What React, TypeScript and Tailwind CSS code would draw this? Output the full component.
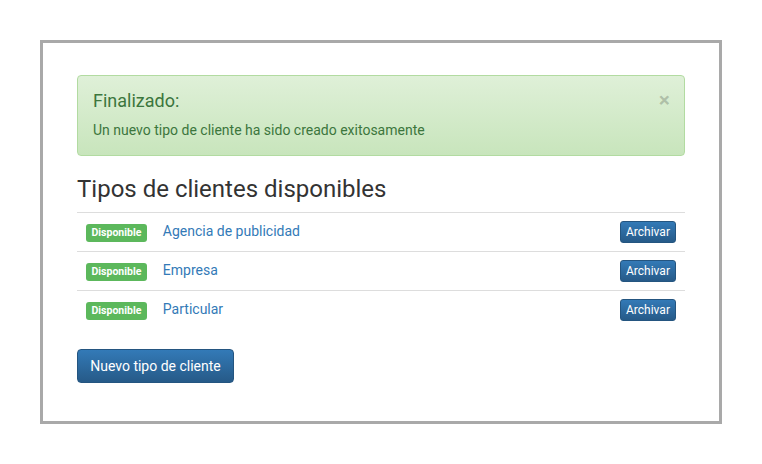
const tipos = ["Agencia de publicidad", "Empresa", "Particular"];

export default function App() {
  return (
    <div
      className="w-[762px] h-[464px] bg-white pt-[40px] pl-[40px]"
      style={{ fontFamily: "Roboto, 'Liberation Sans', sans-serif" }}
    >
      <div className="w-[682px] h-[384px] border-[3px] border-[#a9a9a9] px-[34px] pt-[32px]">
        {/* Alert */}
        <div className="relative h-[81px] rounded-[4px] border border-[#b2dba1] bg-gradient-to-b from-[#dff0d8] to-[#c8e5bc] px-[15px] pt-[15px] text-[#3c763d]">
          <div className="text-[18px] leading-[20px] mb-[9px]">Finalizado:</div>
          <div className="text-[14px] leading-[20px]">
            Un nuevo tipo de cliente ha sido creado exitosamente
          </div>
          <span className="absolute right-[14px] top-[14px] text-[21px] leading-none font-bold text-black/20">
            ×
          </span>
        </div>

        {/* Heading */}
        <h2 className="mt-[20px] mb-[10px] text-[24px] leading-[26px] text-[#333]">
          Tipos de clientes disponibles
        </h2>

        {/* Table */}
        <div className="mb-[20px]">
          {tipos.map((t) => (
            <div
              key={t}
              className="flex h-[39px] items-center border-t border-[#dddddd] pl-[9px] pr-[9px]"
            >
              <span className="mt-[2px] flex h-[18px] items-center rounded-[3px] bg-[#5cb85c] px-[5.5px] text-[10.5px] font-bold text-white">
                Disponible
              </span>
              <a className="ml-[16px] text-[14px] leading-[20px] text-[#337ab7] -mt-[2px]">
                {t}
              </a>
              <button className="ml-auto h-[22px] w-[56px] rounded-[3px] border border-[#245580] bg-gradient-to-b from-[#337ab7] to-[#265a88] text-[12px] text-white">
                Archivar
              </button>
            </div>
          ))}
        </div>

        <button className="h-[34px] w-[157px] rounded-[4px] border border-[#245580] bg-gradient-to-b from-[#337ab7] to-[#265a88] text-[14px] text-white">
          Nuevo tipo de cliente
        </button>
      </div>
    </div>
  );
}
